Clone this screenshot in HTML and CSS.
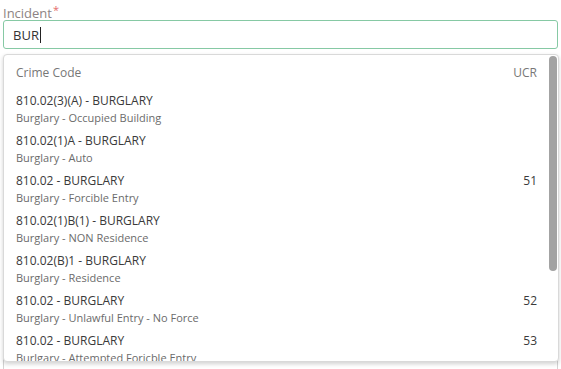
FILE: index.html
```html
<!DOCTYPE html>
<html>
<head>
<meta charset="utf-8">
<link rel="stylesheet" href="styles.css">
</head>
<body>
<div class="page">
  <label class="label">Incident<span class="req">*</span></label>
  <div class="input"><span class="val">BUR</span><span class="caret"></span></div>
  <div class="below"></div>

  <div class="dropdown">
    <div class="head"><span>Crime Code</span><span>UCR</span></div>
    <div class="row"><div class="main"><div class="t">810.02(3)(A) - BURGLARY</div><div class="s">Burglary - Occupied Building</div></div><div class="ucr"></div></div>
    <div class="row"><div class="main"><div class="t">810.02(1)A - BURGLARY</div><div class="s">Burglary - Auto</div></div><div class="ucr"></div></div>
    <div class="row"><div class="main"><div class="t">810.02 - BURGLARY</div><div class="s">Burglary - Forcible Entry</div></div><div class="ucr">51</div></div>
    <div class="row"><div class="main"><div class="t">810.02(1)B(1) - BURGLARY</div><div class="s">Burglary - NON Residence</div></div><div class="ucr"></div></div>
    <div class="row"><div class="main"><div class="t">810.02(B)1 - BURGLARY</div><div class="s">Burglary - Residence</div></div><div class="ucr"></div></div>
    <div class="row"><div class="main"><div class="t">810.02 - BURGLARY</div><div class="s">Burglary - Unlawful Entry - No Force</div></div><div class="ucr">52</div></div>
    <div class="row"><div class="main"><div class="t">810.02 - BURGLARY</div><div class="s">Burlgary - Attempted Foricble Entry</div></div><div class="ucr">53</div></div>
    <div class="scroll"></div>
  </div>
</div>
</body>
</html>
```

FILE: styles.css
```css
html, body {
  margin: 0;
  padding: 0;
  background: #fff;
  font-family: "Open Sans", "Noto Sans", sans-serif;
}
.page {
  position: relative;
  width: 561px;
  height: 369px;
  overflow: hidden;
  padding: 0 3px;
  box-sizing: border-box;
}
.label {
  display: block;
  font-size: 13px;
  line-height: 18px;
  padding-top: 1px;
  height: 19px;
  color: #8d8383;
}
.req {
  color: #e46b6b;
  font-size: 11px;
  vertical-align: 4px;
  margin-left: 1px;
}
.input {
  height: 29px;
  box-sizing: border-box;
  border: 1px solid #86c9a4;
  border-radius: 3px;
  display: flex;
  align-items: center;
  padding-left: 9px;
  font-size: 13px;
  color: #333;
}
.caret {
  display: inline-block;
  width: 1px;
  height: 16px;
  background: #222;
  margin-left: 1px;
}
.below {
  margin-top: 281px;
  height: 40px;
  border: 1px solid #d4d4d4;
  border-radius: 3px;
}
.dropdown {
  position: absolute;
  left: 3px;
  top: 54px;
  width: 556px;
  height: 308px;
  box-sizing: border-box;
  background: #fff;
  border: 1px solid #d9d9d9;
  border-radius: 4px;
  box-shadow: 0 2px 4px rgba(0,0,0,0.18);
  overflow: hidden;
  padding: 0 21px 0 12px;
}
.head {
  display: flex;
  justify-content: space-between;
  height: 35px;
  align-items: center;
  font-size: 12px;
  color: #777;
}
.row {
  display: flex;
  justify-content: space-between;
  height: 40px;
  padding-top: 2px;
  box-sizing: border-box;
}
.t {
  font-size: 12px;
  line-height: 17px;
  color: #3a3a3a;
}
.s {
  font-size: 11px;
  line-height: 17px;
  color: #6b6b6b;
}
.ucr {
  font-size: 12px;
  line-height: 17px;
  color: #3a3a3a;
}
.scroll {
  position: absolute;
  right: 1px;
  top: 1px;
  width: 8px;
  height: 215px;
  border-radius: 4px;
  background: #a3a3a3;
}
```
